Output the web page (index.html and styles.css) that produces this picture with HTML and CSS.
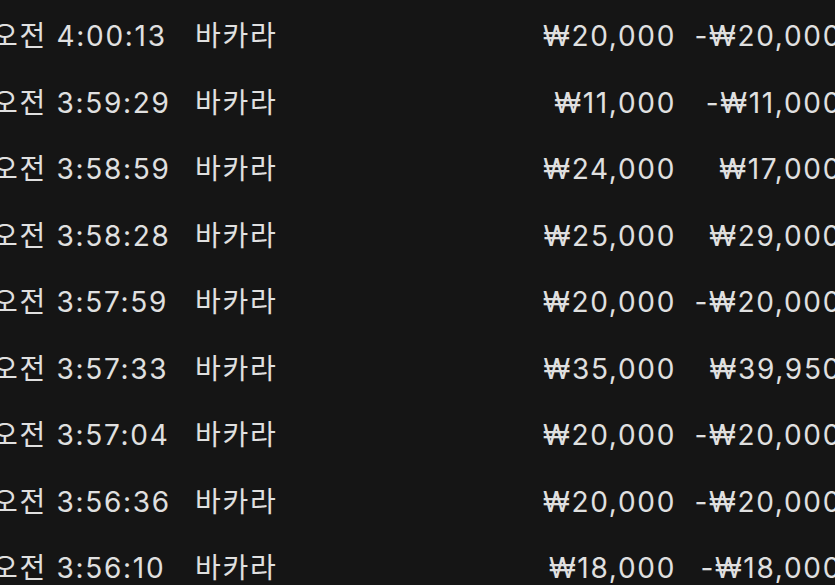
FILE: index.html
```html
<!DOCTYPE html>
<html lang="ko">
<head>
<meta charset="utf-8">
<link rel="stylesheet" href="styles.css">
</head>
<body>
<div class="list">
  <div class="row"><span class="time">오전 4:00:13</span><span class="game">바카라</span><span class="bet">₩20,000</span><span class="win">-₩20,000</span></div>
  <div class="row"><span class="time">오전 3:59:29</span><span class="game">바카라</span><span class="bet">₩11,000</span><span class="win">-₩11,000</span></div>
  <div class="row"><span class="time">오전 3:58:59</span><span class="game">바카라</span><span class="bet">₩24,000</span><span class="win">₩17,000</span></div>
  <div class="row"><span class="time">오전 3:58:28</span><span class="game">바카라</span><span class="bet">₩25,000</span><span class="win">₩29,000</span></div>
  <div class="row"><span class="time">오전 3:57:59</span><span class="game">바카라</span><span class="bet">₩20,000</span><span class="win">-₩20,000</span></div>
  <div class="row"><span class="time">오전 3:57:33</span><span class="game">바카라</span><span class="bet">₩35,000</span><span class="win">₩39,950</span></div>
  <div class="row"><span class="time">오전 3:57:04</span><span class="game">바카라</span><span class="bet">₩20,000</span><span class="win">-₩20,000</span></div>
  <div class="row"><span class="time">오전 3:56:36</span><span class="game">바카라</span><span class="bet">₩20,000</span><span class="win">-₩20,000</span></div>
  <div class="row"><span class="time">오전 3:56:10</span><span class="game">바카라</span><span class="bet">₩18,000</span><span class="win">-₩18,000</span></div>
</div>
</body>
</html>
```
FILE: styles.css
```css
html, body {
  margin: 0;
  padding: 0;
  background: #151515;
  overflow: hidden;
}
.list {
  width: 860px;
  margin-left: -8px;
  padding-top: 3px;
  font-family: "Inter", "Noto Sans CJK KR", sans-serif;
  font-size: 28px;
  letter-spacing: 1.7px;
  color: #e0e0e0;
}
.row {
  display: grid;
  grid-template-columns: 203px 140px 341px 166px;
  height: 66.5px;
  line-height: 66.5px;
  white-space: nowrap;
}
.bet, .win {
  text-align: right;
}
```
